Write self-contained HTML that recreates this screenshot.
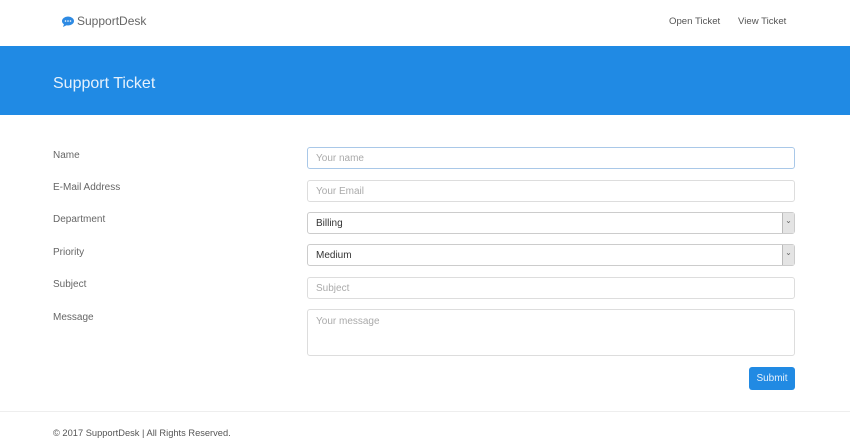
<!DOCTYPE html>
<html><head><style>
body{margin:0;width:850px;height:448px;background:#fff;font-family:"Liberation Sans",sans-serif;color:#636b6f;position:relative;overflow:hidden}
.a{position:absolute}
.nav{font-size:13px;color:#555}
.lbl{position:absolute;left:53px;font-size:10px;color:#666}
.in{position:absolute;left:307px;width:488px;height:21px;border:1px solid #ddd;border-radius:3px;box-sizing:border-box;font-size:10px;color:#aaa;padding-left:8px;line-height:22px;background:#fff}
.sel{color:#333}
.sel:after{content:"⌄";position:absolute;right:0;top:0;width:11px;height:100%;background:#e4e4e4;border-left:1px solid #bbb;font-size:8px;text-align:center;line-height:16px;color:#666}
</style></head><body>
<div class="a" style="left:62px;top:14px;font-size:12px;color:#666;display:flex;align-items:center">
<svg width="12" height="11" viewBox="0 0 12 11"><ellipse cx="6" cy="5" rx="6" ry="4.5" fill="#2d8ae3"/><path d="M2 8 L1 11 L5 9Z" fill="#2d8ae3"/><circle cx="3.5" cy="5" r=".8" fill="#fff"/><circle cx="6" cy="5" r=".8" fill="#fff"/><circle cx="8.5" cy="5" r=".8" fill="#fff"/></svg>
<span style="margin-left:3px">SupportDesk</span></div>
<div class="a nav" style="left:669px;top:16px;font-size:9.6px">Open Ticket</div>
<div class="a nav" style="left:738px;top:16px;font-size:9.6px">View Ticket</div>
<div class="a" style="left:0;top:46px;width:850px;height:69px;background:#208ae4"></div>
<div class="a" style="left:53px;top:75px;font-size:16px;color:#e6f1fc">Support Ticket</div>
<div class="lbl" style="top:150px">Name</div>
<div class="lbl" style="top:182px">E-Mail Address</div>
<div class="lbl" style="top:214px">Department</div>
<div class="lbl" style="top:247px">Priority</div>
<div class="lbl" style="top:279px">Subject</div>
<div class="lbl" style="top:312px">Message</div>
<div class="in" style="top:147px;height:22px;border-color:#a9c8e8">Your name</div>
<div class="in" style="top:180px;height:22px">Your Email</div>
<div class="in sel" style="top:212px;height:22px;border-color:#ccc">Billing</div>
<div class="in sel" style="top:244px;height:22px;border-color:#ccc">Medium</div>
<div class="in" style="top:277px;height:22px">Subject</div>
<div class="in" style="top:309px;height:47px;line-height:24px">Your message</div>
<div class="a" style="left:749px;top:367px;width:46px;height:23px;background:#218ae3;border-radius:3px;color:#e6f1fc;font-size:10px;text-align:center;line-height:23px">Submit</div>
<div class="a" style="left:0;top:411px;width:850px;height:1px;background:#eee"></div>
<div class="a" style="left:53px;top:428px;font-size:9.3px;color:#555">© 2017 SupportDesk | All Rights Reserved.</div>
</body></html>
